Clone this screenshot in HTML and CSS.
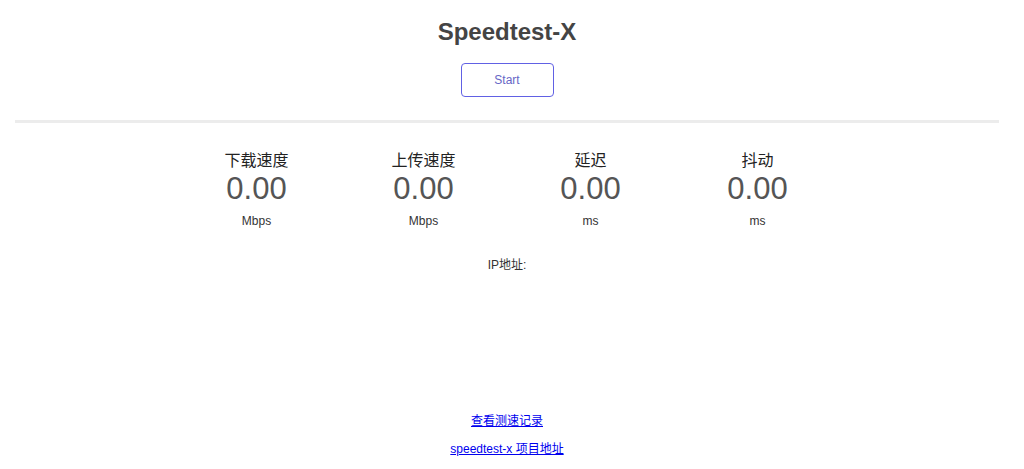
FILE: index.html
```html
<!DOCTYPE html>
<html lang="zh-CN">
  <head>
    <meta charset="UTF-8" />
    <meta name="viewport" content="width=device-width, initial-scale=1.0" />
    <title>Speedtest-X</title>
    <link rel="stylesheet" href="styles.css">
  </head>

  <body>
    <div class="page">
      <div class="header">
        <h1>Speedtest-X</h1>
        <button type="button" class="start_btn">Start</button>
      </div>

      <div class="divider"></div>

      <div class="results">
        <div class="meter">
          <div class="meter_title">下载速度</div>
          <div class="meter_value">0.00</div>
          <div class="meter_unit">Mbps</div>
        </div>
        <div class="meter">
          <div class="meter_title">上传速度</div>
          <div class="meter_value">0.00</div>
          <div class="meter_unit">Mbps</div>
        </div>
        <div class="meter">
          <div class="meter_title">延迟</div>
          <div class="meter_value">0.00</div>
          <div class="meter_unit">ms</div>
        </div>
        <div class="meter">
          <div class="meter_title">抖动</div>
          <div class="meter_value">0.00</div>
          <div class="meter_unit">ms</div>
        </div>
      </div>

      <div class="ip_info">IP地址:</div>

      <div class="footer">
        <a href="#">查看测速记录</a>
        <a href="#">speedtest-x 项目地址</a>
      </div>
    </div>
  </body>
</html>
```

FILE: styles.css
```css
body {
  margin: 0;
  background-color: #fff;
  color: #333;
  font-family: "Liberation Sans", Arial, "Noto Sans CJK SC", sans-serif;
}

.page {
  width: 1014px;
}

.header {
  display: flex;
  flex-direction: column;
  align-items: center;
}

h1 {
  margin: 17px 0 0;
  font-size: 24px;
  line-height: 30px;
  font-weight: bold;
  color: #444;
}

.start_btn {
  margin-top: 16px;
  width: 93px;
  height: 34px;
  border: 1.5px solid #6161e4;
  border-radius: 4px;
  background-color: #fff;
  color: #6767c6;
  font-family: inherit;
  font-size: 12px;
  cursor: pointer;
}

.divider {
  margin: 23px 15px 0;
  height: 3px;
  background-color: #ececec;
}

.results {
  display: grid;
  grid-template-columns: repeat(4, 167px);
  justify-content: center;
  margin-top: 27px;
  text-align: center;
}

.meter_title {
  font-size: 16px;
  line-height: 22px;
  color: #222;
}

.meter_value {
  font-size: 31px;
  line-height: 34px;
  color: #555;
}

.meter_unit {
  margin-top: 7px;
  font-size: 12px;
  line-height: 16px;
  color: #333;
}

.ip_info {
  margin-top: 28px;
  text-align: center;
  font-size: 12px;
  line-height: 16px;
}

.footer {
  display: flex;
  flex-direction: column;
  align-items: center;
  row-gap: 12px;
  margin-top: 140px;
  font-size: 12px;
  line-height: 16px;
}

.footer a {
  color: #0000ee;
}
```
